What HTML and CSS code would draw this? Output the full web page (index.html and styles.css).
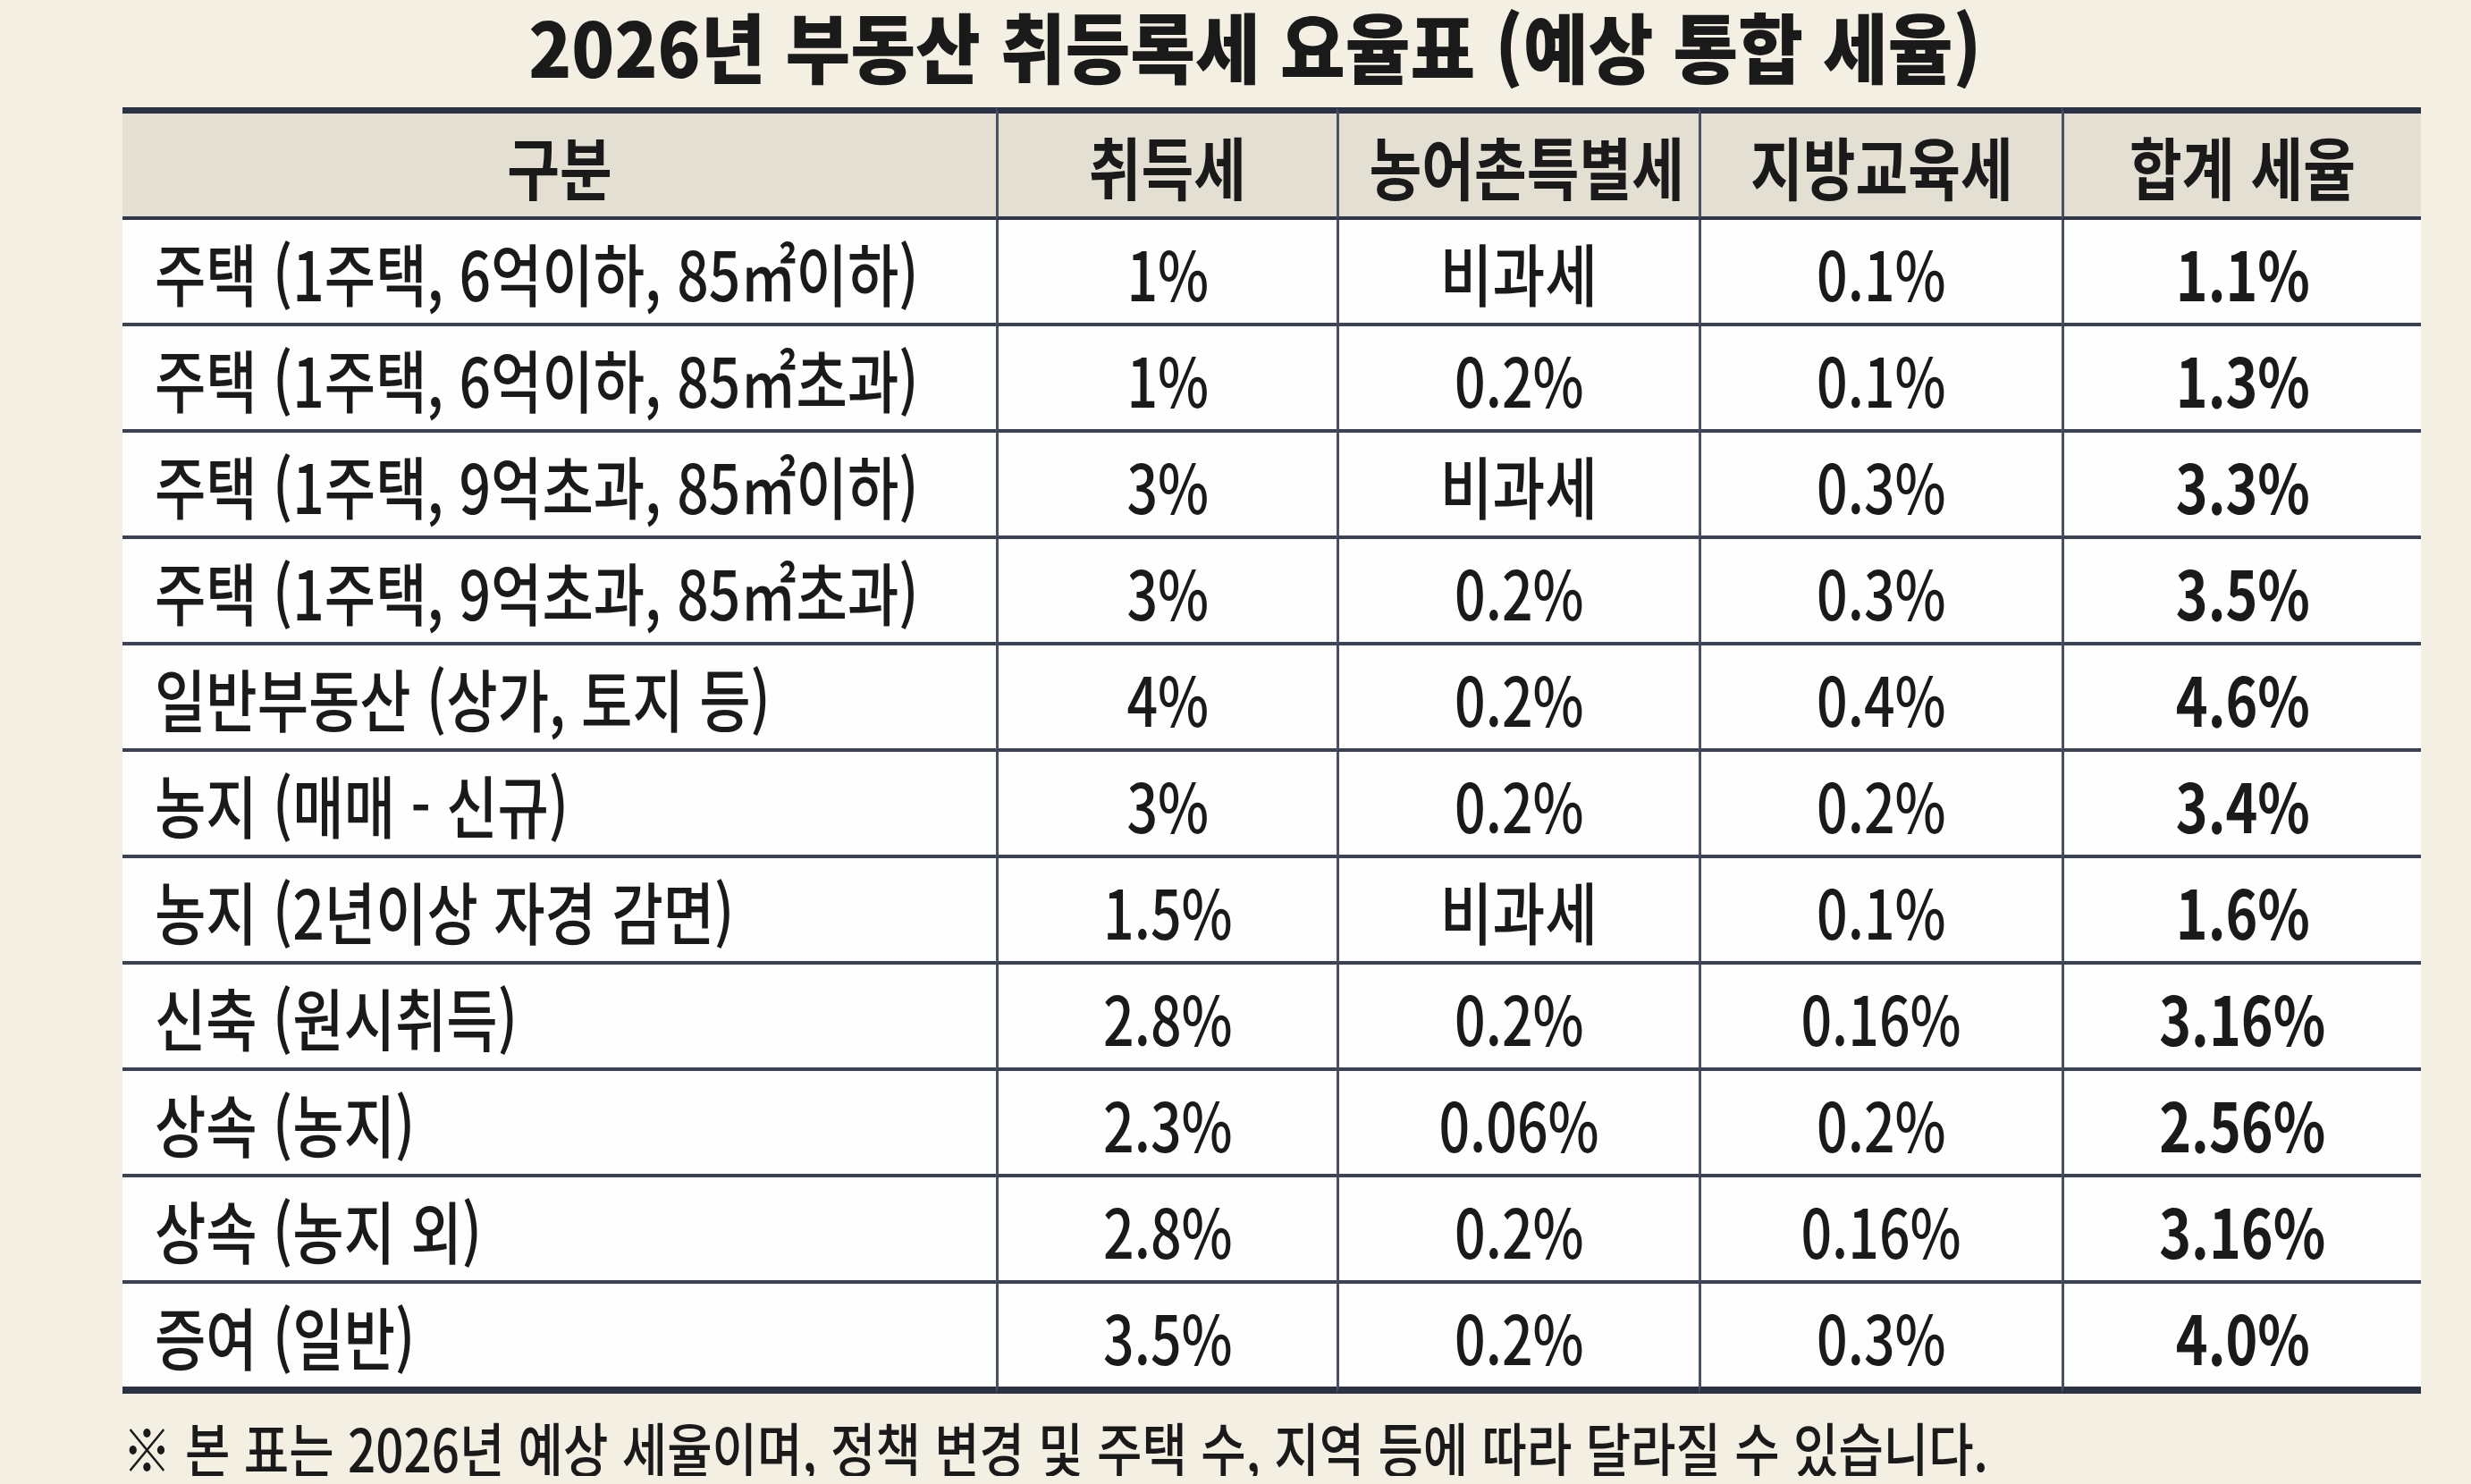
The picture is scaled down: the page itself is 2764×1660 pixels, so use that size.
FILE: index.html
```html
<!DOCTYPE html>
<html lang="ko">
<head>
<meta charset="utf-8">
<title>2026년 부동산 취등록세 요율표</title>
<link rel="stylesheet" href="styles.css">
</head>
<body>
<main class="sheet">
  <h1 class="title"><span class="sx">2026년 부동산 취등록세 요율표 (예상 통합 세율)</span></h1>
  <table class="rates">
    <colgroup>
      <col class="c-name">
      <col class="c-a">
      <col class="c-b">
      <col class="c-c">
      <col class="c-d">
    </colgroup>
    <thead>
      <tr>
        <th><span class="t">구분</span></th>
        <th><span class="t">취득세</span></th>
        <th><span class="t">농어촌특별세</span></th>
        <th><span class="t">지방교육세</span></th>
        <th><span class="t">합계 세율</span></th>
      </tr>
    </thead>
    <tbody>
      <tr><td class="name"><span class="t">주택 (1주택, 6억이하, 85㎡이하)</span></td><td><span class="t">1%</span></td><td class="word"><span class="t">비과세</span></td><td><span class="t">0.1%</span></td><td class="sum"><span class="t">1.1%</span></td></tr>
      <tr><td class="name"><span class="t">주택 (1주택, 6억이하, 85㎡초과)</span></td><td><span class="t">1%</span></td><td><span class="t">0.2%</span></td><td><span class="t">0.1%</span></td><td class="sum"><span class="t">1.3%</span></td></tr>
      <tr><td class="name"><span class="t">주택 (1주택, 9억초과, 85㎡이하)</span></td><td><span class="t">3%</span></td><td class="word"><span class="t">비과세</span></td><td><span class="t">0.3%</span></td><td class="sum"><span class="t">3.3%</span></td></tr>
      <tr><td class="name"><span class="t">주택 (1주택, 9억초과, 85㎡초과)</span></td><td><span class="t">3%</span></td><td><span class="t">0.2%</span></td><td><span class="t">0.3%</span></td><td class="sum"><span class="t">3.5%</span></td></tr>
      <tr><td class="name"><span class="t">일반부동산 (상가, 토지 등)</span></td><td><span class="t">4%</span></td><td><span class="t">0.2%</span></td><td><span class="t">0.4%</span></td><td class="sum"><span class="t">4.6%</span></td></tr>
      <tr><td class="name"><span class="t">농지 (매매 - 신규)</span></td><td><span class="t">3%</span></td><td><span class="t">0.2%</span></td><td><span class="t">0.2%</span></td><td class="sum"><span class="t">3.4%</span></td></tr>
      <tr><td class="name"><span class="t">농지 (2년이상 자경 감면)</span></td><td><span class="t">1.5%</span></td><td class="word"><span class="t">비과세</span></td><td><span class="t">0.1%</span></td><td class="sum"><span class="t">1.6%</span></td></tr>
      <tr><td class="name"><span class="t">신축 (원시취득)</span></td><td><span class="t">2.8%</span></td><td><span class="t">0.2%</span></td><td><span class="t">0.16%</span></td><td class="sum"><span class="t">3.16%</span></td></tr>
      <tr><td class="name"><span class="t">상속 (농지)</span></td><td><span class="t">2.3%</span></td><td><span class="t">0.06%</span></td><td><span class="t">0.2%</span></td><td class="sum"><span class="t">2.56%</span></td></tr>
      <tr><td class="name"><span class="t">상속 (농지 외)</span></td><td><span class="t">2.8%</span></td><td><span class="t">0.2%</span></td><td><span class="t">0.16%</span></td><td class="sum"><span class="t">3.16%</span></td></tr>
      <tr><td class="name"><span class="t">증여 (일반)</span></td><td><span class="t">3.5%</span></td><td><span class="t">0.2%</span></td><td><span class="t">0.3%</span></td><td class="sum"><span class="t">4.0%</span></td></tr>
    </tbody>
  </table>
  <p class="note"><span class="nx">※ 본 표는 2026년 예상 세율이며, 정책 변경 및 주택 수, 지역 등에 따라 달라질 수 있습니다.</span></p>
</main>
</body>
</html>
```

FILE: styles.css
```css
html, body {
  margin: 0;
  padding: 0;
  background: #f4efe3;
}

body {
  font-family: "Noto Sans CJK KR", "Noto Sans", sans-serif;
  color: #1a1a1a;
}

.sheet {
  width: 2571px;
  padding-left: 137px;
  display: flex;
  flex-direction: column;
}

.title {
  margin: 0;
  height: 120px;
  line-height: 100px;
  font-size: 85px;
  font-weight: 900;
  text-align: center;
  padding-right: 38px;
  white-space: nowrap;
}

.title .sx {
  display: inline-block;
  transform: scaleX(0.93);
  transform-origin: center;
}

.rates {
  width: 2571px;
  table-layout: fixed;
  border-collapse: separate;
  border-spacing: 0;
}

.c-name { width: 977px; }
.c-a { width: 381px; }
.c-b { width: 405px; }
.c-c { width: 406px; }
.c-d { width: 402px; }

.rates th,
.rates td {
  padding: 0;
  height: 115px;
  font-size: 76px;
  line-height: 1;
  text-align: center;
  vertical-align: middle;
  white-space: nowrap;
  border-bottom: 4px solid #3a4253;
  background: #fefefe;
}

.rates th {
  background: #e4dfd3;
  font-weight: 700;
  border-top: 7px solid #2a3346;
  border-bottom-color: #2f3749;
}

.rates th + th,
.rates td + td {
  border-left: 3px solid #4a5163;
}

.rates tbody tr:last-child td {
  border-bottom: 8px solid #2a3346;
}

.rates td {
  font-weight: 500;
}

.rates td.name {
  text-align: left;
  padding-left: 36px;
}

.rates td.sum {
  font-weight: 700;
}

.t {
  display: inline-block;
  transform: scaleX(0.8);
  transform-origin: center;
}

.rates th .t {
  transform: scaleX(0.84);
}

.rates td.word .t {
  transform: scaleX(0.84);
}

.rates td.name .t {
  transform: scaleX(0.82);
  transform-origin: left center;
}

.note {
  margin: 26px 0 0;
  font-size: 66px;
  line-height: 1;
  font-weight: 500;
  white-space: nowrap;
}

.note .nx {
  display: inline-block;
  transform: scaleX(0.83);
  transform-origin: left center;
}
```
